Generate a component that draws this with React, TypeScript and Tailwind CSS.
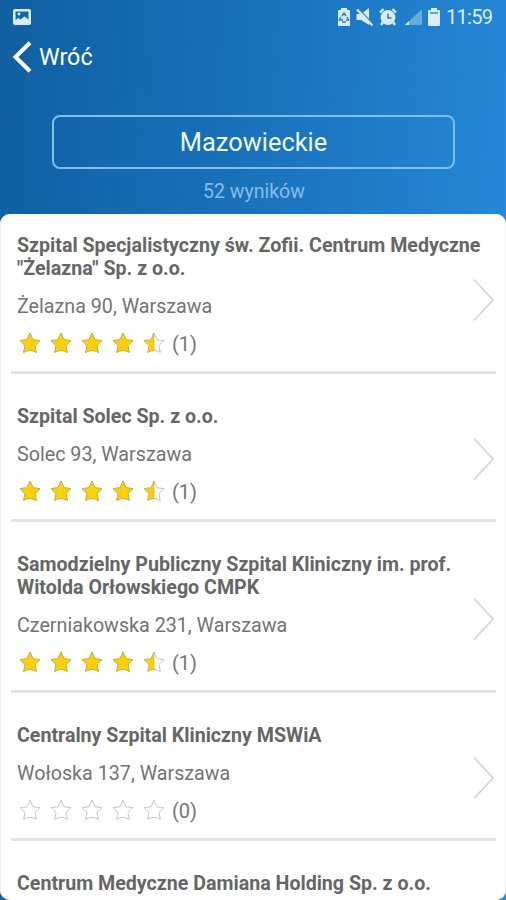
type Hospital = { name: string[]; address: string; rating: number; votes: number };

const hospitals: Hospital[] = [
  { name: ['Szpital Specjalistyczny św. Zofii. Centrum Medyczne', '"Żelazna" Sp. z o.o.'], address: 'Żelazna 90, Warszawa', rating: 4.5, votes: 1 },
  { name: ['Szpital Solec Sp. z o.o.'], address: 'Solec 93, Warszawa', rating: 4.5, votes: 1 },
  { name: ['Samodzielny Publiczny Szpital Kliniczny im. prof.', 'Witolda Orłowskiego CMPK'], address: 'Czerniakowska 231, Warszawa', rating: 4.5, votes: 1 },
  { name: ['Centralny Szpital Kliniczny MSWiA'], address: 'Wołoska 137, Warszawa', rating: 0, votes: 0 },
];

const STAR = 'M11 1 L14 7.8 L21 8.6 L15.9 13.5 L17.3 20.4 Q11 16.4 4.7 20.4 L6.1 13.5 L1 8.6 L8 7.8 Z';
const HALF = 'M11 1 L11 18.4 Q7.8 18.4 4.7 20.4 L6.1 13.5 L1 8.6 L8 7.8 Z';

function Star({ fill }: { fill: number }) {
  return (
    <svg viewBox="0 0 22 22" className="h-[22px] w-[22px]">
      <path d={STAR} fill="#fff" stroke={fill === 1 ? '#b5a774' : '#c4c4c4'} strokeWidth="1" strokeLinejoin="round" />
      {fill > 0 && <path d={fill === 1 ? STAR : HALF} fill="#fbd008" stroke="#c5aa3c" strokeWidth="0.6" strokeLinejoin="round" />}
    </svg>
  );
}

function Row({ item }: { item: Hospital }) {
  return (
    <li className="ml-[11px] mr-[10px] flex border-b-[3px] border-[#e3e3e3] pl-1.5 pt-[31px]">
      <div className="w-0 grow">
        <h2 className="whitespace-nowrap text-[19.62px] font-bold leading-[23px] text-[#666666]">
          {item.name.map((line) => <span key={line} className="block">{line}</span>)}
        </h2>
        <p className="mt-[9px] h-[35px] whitespace-nowrap text-[19.7px] leading-[35px] text-[#737373]">{item.address}</p>
        <div className="flex h-[47px] items-start gap-[9px] pl-0.5 pt-[8px]">
          {[0, 1, 2, 3, 4].map((i) => <Star key={i} fill={Math.max(0, Math.min(1, item.rating - i))} />)}
          <span className="-ml-[2px] text-[20px] leading-[25px] text-[#757575]">({item.votes})</span>
        </div>
      </div>
      <svg viewBox="0 0 24 44" className="mt-[-6px] h-11 w-6 shrink-0 self-center" fill="none" stroke="#d6d6d6" strokeWidth="1.8">
        <path d="M2 1.5 L21 22 L2 42.5" />
      </svg>
    </li>
  );
}

function StatusBar() {
  return (
    <div className="flex h-[34px] items-center pl-[13px] pr-[14px] text-[#d8ecfa]">
      <svg viewBox="0 0 18 16" className="h-4 w-[18px]">
        <rect width="18" height="16" rx="2" fill="currentColor" />
        <path d="M2.5 2.5h13v8l-4-3-4 3-2-1.5-3 2z" fill="#1768a8" />
        <circle cx="6" cy="5" r="1.4" fill="currentColor" />
      </svg>
      <div className="ml-auto flex items-center">
        <svg viewBox="0 0 14 18" className="h-[18px] w-[14px]">
          <path d="M4 0h6v2h3v16H1V2h3z" fill="currentColor" />
          <path d="M5 8l2-3 2 3M10 9l1.5 3H9M4 9l-1.5 3H6M5 14h4" stroke="#237fc9" strokeWidth="1.4" fill="none" />
        </svg>
        <svg viewBox="0 0 18 18" className="ml-[5px] h-[18px] w-[18px]">
          <path d="M0.5 6h4.5L13 0v17l-8-5H0.5z" fill="currentColor" />
          <path d="M2.5 0.5l14 15" stroke="#237fc9" strokeWidth="1.2" />
          <path d="M1 1.5l15.5 16" stroke="currentColor" strokeWidth="2.2" />
        </svg>
        <svg viewBox="0 0 18 18" className="ml-[5px] h-[18px] w-[18px]" fill="none" stroke="currentColor">
          <path d="M1 4.5L4.5 1M17 4.5L13.5 1M4 14l-2 3M14 14l2 3" strokeWidth="2.4" />
          <circle cx="9" cy="9.5" r="7.4" fill="currentColor" stroke="none" />
          <path d="M9 5.5v4.5h3.5" stroke="#237fc9" strokeWidth="1.5" />
        </svg>
        <svg viewBox="0 0 18 18" className="ml-[7px] h-[18px] w-[18px]">
          <path d="M18 1v16H1z" fill="currentColor" opacity="0.4" />
          <path d="M5 13v4H1z" fill="currentColor" />
        </svg>
        <svg viewBox="0 0 12 18" className="ml-[6px] h-[18px] w-3">
          <path d="M3 0h6v2h2q1 0 1 1v14q0 1-1 1H1q-1 0-1-1V3q0-1 1-1h2z" fill="currentColor" />
          <path d="M2 5h8" stroke="#5fa8dd" strokeWidth="2" />
        </svg>
        <span className="ml-1.5 w-[46px] whitespace-nowrap text-[20px] leading-6 tracking-[-0.7px]">11:59</span>
      </div>
    </div>
  );
}

export default function App() {
  return (
    <main className="flex h-[900px] w-[506px] flex-col overflow-hidden bg-linear-[93deg] from-[#1060a2] via-[#1a73bd] to-[#268bdc] font-[Roboto,sans-serif]">
      <StatusBar />
      <header className="flex h-[46px] items-center pl-3 text-white">
        <svg viewBox="0 0 19 32" className="-mt-px h-8 w-5" fill="none" stroke="currentColor" strokeWidth="4">
          <path d="M17.5 1.8L3 16l14.5 14.2" />
        </svg>
        <span className="ml-[7px] text-[23.3px] leading-8">Wróć</span>
      </header>
      <div className="ml-[52px] mt-[35px] flex h-[54px] w-[403px] shrink-0 items-center justify-center rounded-[8px] border-2 border-[#82bee9] pt-px text-[25.4px] text-[#edf8ff]">
        Mazowieckie
      </div>
      <p className="mt-[9px] h-[36px] shrink-0 pl-0.5 pt-px text-center text-[19.5px] leading-[26px] text-[#88bdea]">52 wyników</p>
      <ul className="h-[686px] shrink-0 overflow-hidden rounded-[10px] bg-white shadow-[inset_1px_0_0_#e9edf0,inset_-1px_0_0_#eef0f2]">
        {hospitals.map((h, i) => (
          <div key={h.address} className={i === 0 ? '-mt-[11px]' : ''}>
            <Row item={h} />
          </div>
        ))}
        <li className="ml-[11px] pl-1.5 pt-[31px]">
          <h2 className="whitespace-nowrap text-[19.62px] font-bold leading-[23px] text-[#666666]">Centrum Medyczne Damiana Holding Sp. z o.o.</h2>
        </li>
      </ul>
    </main>
  );
}
